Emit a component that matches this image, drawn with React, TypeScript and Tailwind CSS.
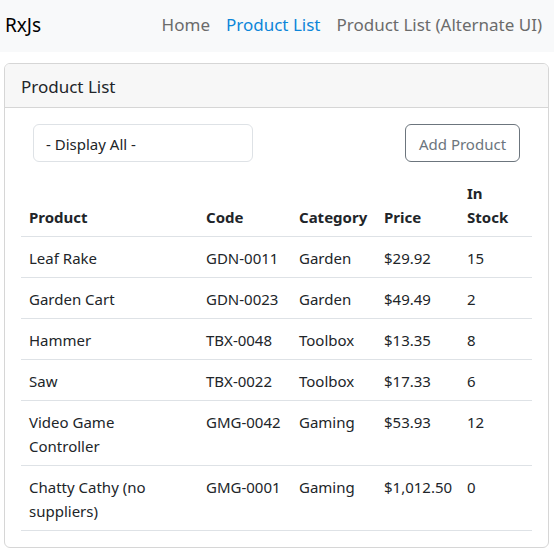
import React from 'react';

type Product = {
  name: string;
  code: string;
  category: string;
  price: string;
  stock: number;
};

const products: Product[] = [
  { name: 'Leaf Rake', code: 'GDN-0011', category: 'Garden', price: '$29.92', stock: 15 },
  { name: 'Garden Cart', code: 'GDN-0023', category: 'Garden', price: '$49.49', stock: 2 },
  { name: 'Hammer', code: 'TBX-0048', category: 'Toolbox', price: '$13.35', stock: 8 },
  { name: 'Saw', code: 'TBX-0022', category: 'Toolbox', price: '$17.33', stock: 6 },
  { name: 'Video Game Controller', code: 'GMG-0042', category: 'Gaming', price: '$53.93', stock: 12 },
  { name: 'Chatty Cathy (no suppliers)', code: 'GMG-0001', category: 'Gaming', price: '$1,012.50', stock: 0 },
];

const App = () => {
  return (
    <div className="min-h-[559px] bg-white text-[#212529] font-['Noto_Sans',sans-serif]">
      {/* ナビバー */}
      <nav className="flex items-center justify-between h-[52px] bg-[#f8f9fa] pl-[5px] pr-[4px] pb-[2px]">
        <span className="text-[19px] leading-[28px] text-black">RxJs</span>
        <ul className="flex items-center text-[17px] leading-[26px]">
          <li className="px-2 text-[#6b6b6b]">Home</li>
          <li className="px-2 text-[#0d86d9]">Product List</li>
          <li className="px-2 text-[#6b6b6b]">Product List (Alternate UI)</li>
        </ul>
      </nav>

      {/* カード */}
      <div className="mt-[11px] ml-[4px] w-[545px] border border-[#d6d6d6] rounded-[6px] overflow-hidden">
        <div className="bg-[#f7f7f7] border-b border-[#d6d6d6] px-4 pt-[9px] pb-[7px] text-[17px] leading-[27px]">
          Product List
        </div>

        <div className="p-4">
          <div className="flex items-center justify-between px-3">
            <div className="w-[220px] h-[38px] flex items-center px-3 pt-[2px] border border-[#dee2e6] rounded-[6px] text-[15px]">
              - Display All -
            </div>
            <button className="h-[38px] w-[115px] pt-[2px] border border-[#6c757d] rounded-[6px] text-[#6c757d] text-[15px]">
              Add Product
            </button>
          </div>

          <table className="mt-[10px] w-full table-fixed border-collapse text-[15px] leading-[24px]">
            <colgroup>
              <col className="w-[177px]" />
              <col className="w-[93px]" />
              <col className="w-[85px]" />
              <col className="w-[83px]" />
              <col />
            </colgroup>
            <thead>
              <tr className="border-b border-[#dee2e6] font-bold text-left align-bottom">
                <th className="pt-[9px] pb-[7px] pl-2 pr-[36px]">Product</th>
                <th className="pt-[9px] pb-[7px] px-2">Code</th>
                <th className="pt-[9px] pb-[7px] px-2">Category</th>
                <th className="pt-[9px] pb-[7px] px-2">Price</th>
                <th className="pt-[9px] pb-[7px] px-2">
                  <span className="block w-[44px]">In Stock</span>
                </th>
              </tr>
            </thead>
            <tbody>
              {products.map((p) => (
                <tr key={p.code} className="border-b border-[#dee2e6] align-top">
                  <td className="pt-[9px] pb-[7px] pl-2 pr-[36px]">{p.name}</td>
                  <td className="pt-[9px] pb-[7px] px-2">{p.code}</td>
                  <td className="pt-[9px] pb-[7px] px-2">{p.category}</td>
                  <td className="pt-[9px] pb-[7px] px-2 whitespace-nowrap">{p.price}</td>
                  <td className="pt-[9px] pb-[7px] px-2">{p.stock}</td>
                </tr>
              ))}
            </tbody>
          </table>
        </div>
      </div>
    </div>
  );
};

export default App;
